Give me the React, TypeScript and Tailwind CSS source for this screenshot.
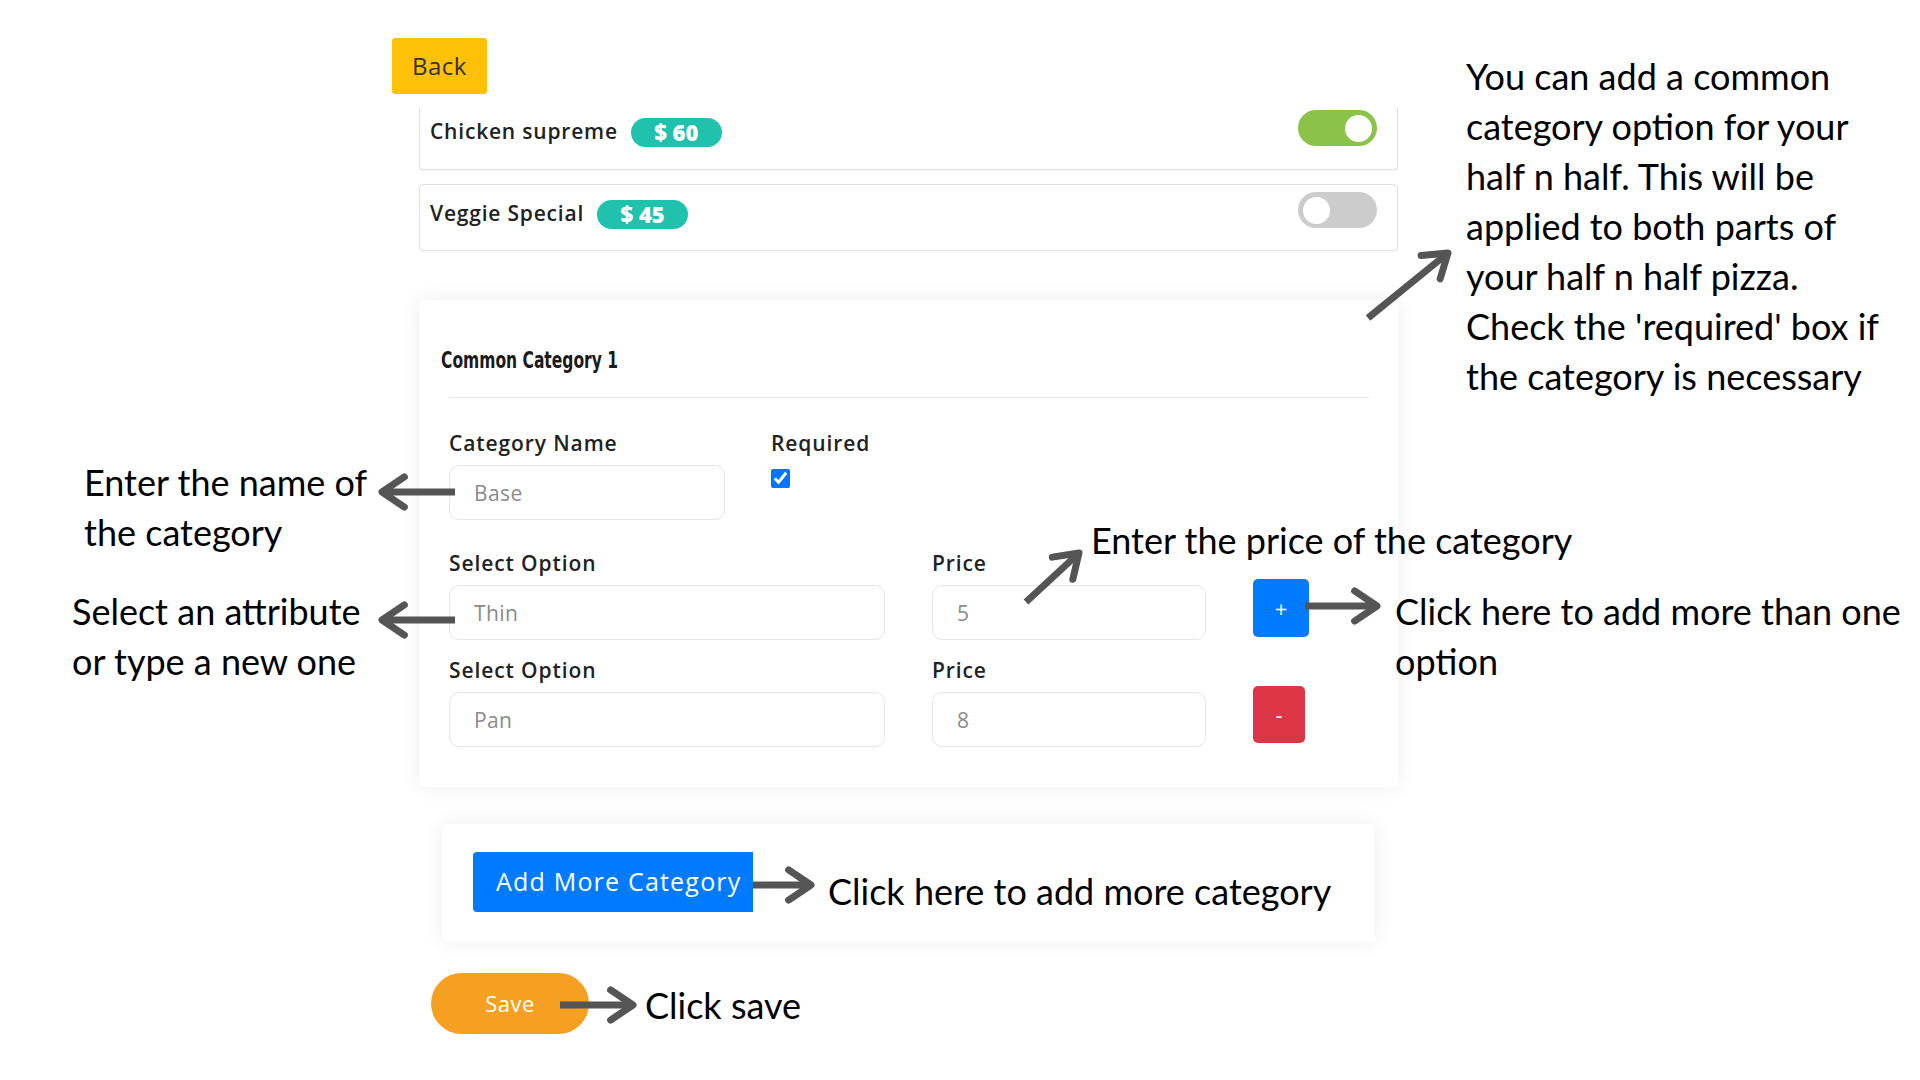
import React from "react";

const ui = { fontFamily: '"Open Sans", "Liberation Sans", sans-serif' };
const note = { fontFamily: 'Lato, "Open Sans", sans-serif' };

type Line = { x1: number; y1: number; x2: number; y2: number };

const arrows: Line[] = [
  { x1: 1368, y1: 318, x2: 1448, y2: 253 },
  { x1: 455, y1: 492, x2: 382, y2: 492 },
  { x1: 455, y1: 620, x2: 382, y2: 620 },
  { x1: 1026, y1: 602, x2: 1079, y2: 553 },
  { x1: 1305, y1: 606, x2: 1377, y2: 606 },
  { x1: 753, y1: 885, x2: 811, y2: 885 },
  { x1: 560, y1: 1005, x2: 633, y2: 1005 },
];

function Arrow({ x1, y1, x2, y2 }: Line) {
  const t = Math.atan2(y2 - y1, x2 - x1);
  const len = 27;
  const a = (34 * Math.PI) / 180;
  const h1 = [x2 - len * Math.cos(t - a), y2 - len * Math.sin(t - a)];
  const h2 = [x2 - len * Math.cos(t + a), y2 - len * Math.sin(t + a)];
  return (
    <g stroke="#555555" strokeWidth={7} fill="none">
      <line x1={x1} y1={y1} x2={x2 - 3 * Math.cos(t)} y2={y2 - 3 * Math.sin(t)} />
      <polyline
        points={`${h1[0]},${h1[1]} ${x2},${y2} ${h2[0]},${h2[1]}`}
        strokeLinecap="round"
        strokeLinejoin="round"
      />
    </g>
  );
}

function Note({
  left,
  top,
  lines,
}: {
  left: number;
  top: number;
  lines: string[];
}) {
  return (
    <div
      className="absolute text-[36px] leading-[50px] text-black whitespace-nowrap"
      style={{ ...note, left, top }}
    >
      {lines.map((l) => (
        <div key={l}>{l}</div>
      ))}
    </div>
  );
}

function Toggle({ on }: { on: boolean }) {
  return (
    <div
      className={
        on
          ? "flex h-[36px] w-[79px] items-center justify-end rounded-full bg-[#8bc34a] px-[5px]"
          : "flex h-[36px] w-[79px] items-center justify-start rounded-full bg-[#cccccc] px-[5px]"
      }
    >
      <div className="h-[27px] w-[27px] rounded-full bg-white" />
    </div>
  );
}

function PizzaRow({
  name,
  price,
  on,
  first,
}: {
  name: string;
  price: string;
  on: boolean;
  first?: boolean;
}) {
  return (
    <div
      className={
        first
          ? "flex h-[62px] items-start justify-between rounded-b-[4px] border-x border-b border-[#e2e2e2] bg-white pl-[10px] pr-[20px] pt-[2px] shadow-[0_1px_2px_rgba(0,0,0,0.05)]"
          : "flex h-[67px] items-start justify-between rounded-[4px] border border-[#e2e2e2] bg-white pl-[10px] pr-[20px] pt-[7px] shadow-[0_1px_2px_rgba(0,0,0,0.05)]"
      }
    >
      <div className="mt-[4px] flex h-[36px] items-center gap-[13px]">
        <span className="text-[21px] font-semibold tracking-[0.8px] text-[#222]">
          {name}
        </span>
        <span className="flex h-[29px] w-[91px] items-center justify-center rounded-full bg-[#20c1ad] text-[22px] font-extrabold text-white">
          {price}
        </span>
      </div>
      <Toggle on={on} />
    </div>
  );
}

function Label({ children }: { children: React.ReactNode }) {
  return (
    <label className="h-[24px] text-[21px] font-semibold leading-[24px] tracking-[0.9px] text-[#222]">
      {children}
    </label>
  );
}

function Field({
  label,
  placeholder,
  width,
}: {
  label: string;
  placeholder: string;
  width: string;
}) {
  return (
    <div className={`flex flex-col ${width}`}>
      <Label>{label}</Label>
      <input
        readOnly
        placeholder={placeholder}
        className="mt-[10px] h-[55px] w-full rounded-[10px] border-[1.5px] border-[#e9e5e0] bg-white px-[24px] text-[21px] tracking-[0.4px] outline-none placeholder:text-[#8a8a8a]"
      />
    </div>
  );
}

export default function App() {
  return (
    <div className="relative h-[1080px] w-[1920px] overflow-hidden bg-white" style={ui}>
      <div className="ml-[392px] flex w-[1006px] flex-col pt-[38px]">
        <button className="flex h-[56px] w-[95px] items-center justify-center rounded-[3px] bg-[#ffc107] text-[24px] tracking-[0.5px] text-[#333]">
          Back
        </button>

        <div className="ml-[27px] mt-[14px] flex w-[979px] flex-col gap-[14px]">
          <PizzaRow name="Chicken supreme" price="$ 60" on first />
          <PizzaRow name="Veggie Special" price="$ 45" on={false} />
        </div>

        <div className="ml-[27px] mt-[49px] flex h-[487px] w-[979px] flex-col rounded-[6px] bg-white px-[22px] pt-[47px] shadow-[0_0_22px_rgba(0,0,0,0.07)]">
          <h3
            className="h-[26px] origin-left scale-x-[0.75] text-[23px] font-bold leading-[26px] text-[#1a1a1a]"
            style={{ fontFamily: '"DejaVu Sans Condensed", "DejaVu Sans", sans-serif' }}
          >
            Common Category 1
          </h3>
          <div className="pl-[8px] pr-[7px]">
            <div className="mt-[24px] border-t border-[#e6e6e6]" />

            <div className="mt-[33px] flex gap-[46px]">
              <Field label="Category Name" placeholder="Base" width="w-[276px]" />
              <div className="flex flex-col">
                <Label>Required</Label>
                <input
                  type="checkbox"
                  defaultChecked
                  className="mt-[14px] h-[19px] w-[19px] accent-[#0075ff]"
                />
              </div>
            </div>

            <div className="mt-[31px] flex items-end gap-[47px]">
              <Field label="Select Option" placeholder="Thin" width="w-[436px]" />
              <Field label="Price" placeholder="5" width="w-[274px]" />
              <button className="mb-[3px] flex h-[58px] w-[56px] items-center justify-center rounded-[5px] bg-[#007bff] text-[22px] text-white">
                +
              </button>
            </div>

            <div className="mt-[18px] flex items-end gap-[47px]">
              <Field label="Select Option" placeholder="Pan" width="w-[436px]" />
              <Field label="Price" placeholder="8" width="w-[274px]" />
              <button className="mb-[4px] flex h-[57px] w-[52px] items-center justify-center rounded-[5px] bg-[#dc3545] text-[22px] text-white">
                -
              </button>
            </div>
          </div>
        </div>

        <div className="ml-[50px] mt-[37px] h-[118px] w-[933px] rounded-[6px] bg-white pl-[31px] pt-[28px] shadow-[0_0_22px_rgba(0,0,0,0.07)]">
          <button className="flex h-[60px] w-[280px] items-center rounded-l-[4px] bg-[#007bff] pl-[23px] text-[25px] tracking-[1.2px] text-white">
            Add More Category
          </button>
        </div>

        <button className="ml-[39px] mt-[31px] flex h-[61px] w-[158px] items-center justify-center rounded-full bg-[#f5a020] text-[22px] font-medium tracking-[0.5px] text-white">
          Save
        </button>
      </div>

      <svg
        className="pointer-events-none absolute inset-0"
        width={1920}
        height={1080}
        viewBox="0 0 1920 1080"
      >
        {arrows.map((a, i) => (
          <Arrow key={i} {...a} />
        ))}
      </svg>

      <Note
        left={1466}
        top={51}
        lines={[
          "You can add a common",
          "category option for your",
          "half n half. This will be",
          "applied to both parts of",
          "your half n half pizza.",
          "Check the 'required' box if",
          "the category is necessary",
        ]}
      />
      <Note left={84} top={457} lines={["Enter the name of", "the category"]} />
      <Note left={72} top={586} lines={["Select an attribute", "or type a new one"]} />
      <Note left={1091} top={515} lines={["Enter the price of the category"]} />
      <Note left={1395} top={586} lines={["Click here to add more than one", "option"]} />
      <Note left={828} top={866} lines={["Click here to add more category"]} />
      <Note left={645} top={980} lines={["Click save"]} />
    </div>
  );
}
